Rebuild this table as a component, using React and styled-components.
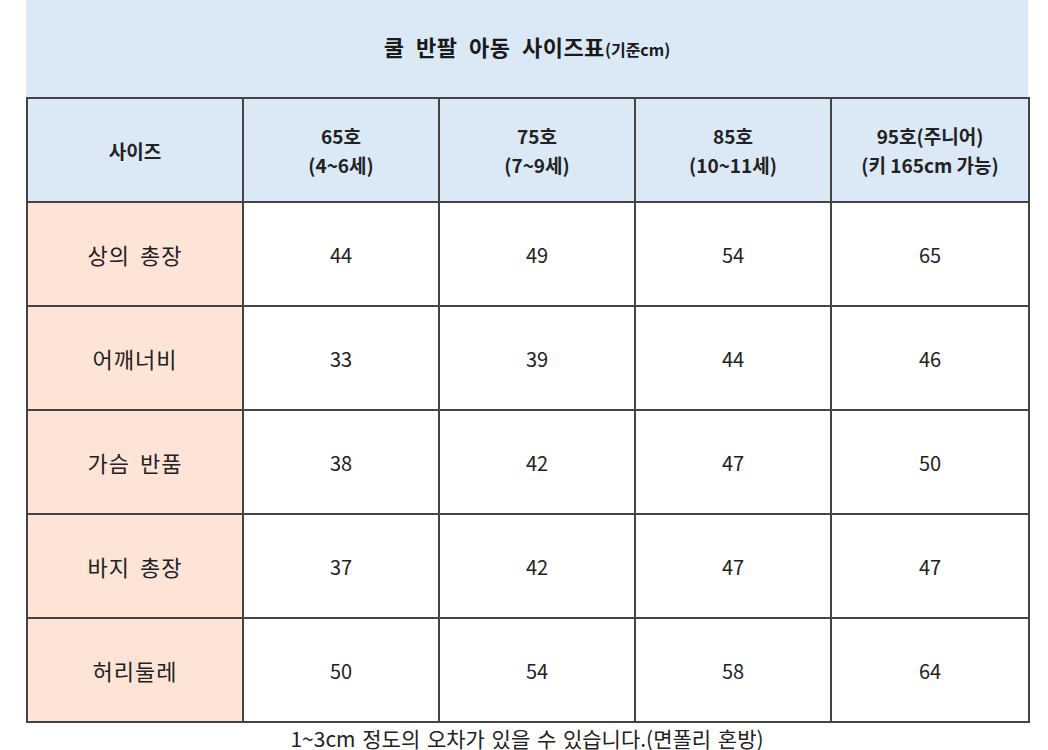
import styled, { createGlobalStyle } from "styled-components";

const GlobalStyle = createGlobalStyle`
  body {
    margin: 0;
    background: #ffffff;
    font-family: "Noto Sans CJK KR", "Noto Sans", sans-serif;
    color: #222;
  }
`;

const Sheet = styled.div`
  width: 1002px;
  margin-left: 26px;
`;

const TitleBand = styled.div`
  height: 97px;
  background-color: #dbe8f6;
  display: flex;
  align-items: center;
  justify-content: center;
  padding-bottom: 6px;
  box-sizing: border-box;
`;

const Title = styled.h3`
  margin: 0;
  font-size: 22px;
  font-weight: bold;
  color: #1a1a1a;
  letter-spacing: 0.5px;
  word-spacing: 6px;
`;

const TitleUnit = styled.span`
  font-size: 16px;
  letter-spacing: 0;
`;

const Table = styled.table`
  width: 1002px;
  border-collapse: collapse;
  table-layout: fixed;
  border: 2px solid #444;
`;

const Cell = styled.td`
  border: 2px solid #444;
  height: 102px;
  padding: 0;
  text-align: center;
  vertical-align: middle;
  font-size: 20px;
  color: #222;
  background-color: ${(props) =>
    props.$kind === "head" ? "#dbe8f6" : props.$kind === "label" ? "#fde4d6" : "#ffffff"};
  font-weight: ${(props) => (props.$kind === "head" ? "bold" : "normal")};
  ${(props) => props.$kind === "head" && "font-size: 19px; line-height: 29px;"}
  ${(props) => props.$kind === "label" && "font-size: 22px; letter-spacing: 1px; word-spacing: 4px;"}
`;

const Note = styled.p`
  margin: 0;
  text-align: center;
  font-size: 21px;
  line-height: 30px;
  color: #222;
  word-spacing: 2px;
`;

const columns = [
  ["65호", "(4~6세)"],
  ["75호", "(7~9세)"],
  ["85호", "(10~11세)"],
  ["95호(주니어)", "(키 165cm 가능)"],
];

const rows = [
  ["상의 총장", 44, 49, 54, 65],
  ["어깨너비", 33, 39, 44, 46],
  ["가슴 반품", 38, 42, 47, 50],
  ["바지 총장", 37, 42, 47, 47],
  ["허리둘레", 50, 54, 58, 64],
];

export default function App() {
  return (
    <Sheet>
      <GlobalStyle />
      <TitleBand>
        <Title>
          쿨 반팔 아동 사이즈표<TitleUnit>(기준cm)</TitleUnit>
        </Title>
      </TitleBand>
      <Table>
        <colgroup>
          <col style={{ width: 216 }} />
          <col style={{ width: 196 }} />
          <col style={{ width: 196 }} />
          <col style={{ width: 196 }} />
          <col style={{ width: 198 }} />
        </colgroup>
        <tbody>
          <tr>
            <Cell $kind="head">사이즈</Cell>
            {columns.map(([size, age]) => (
              <Cell $kind="head" key={size}>
                {size}
                <br />
                {age}
              </Cell>
            ))}
          </tr>
          {rows.map(([label, ...values]) => (
            <tr key={label}>
              <Cell $kind="label">{label}</Cell>
              {values.map((v, i) => (
                <Cell key={i}>{v}</Cell>
              ))}
            </tr>
          ))}
        </tbody>
      </Table>
      <Note>1~3cm 정도의 오차가 있을 수 있습니다.(면폴리 혼방)</Note>
    </Sheet>
  );
}
